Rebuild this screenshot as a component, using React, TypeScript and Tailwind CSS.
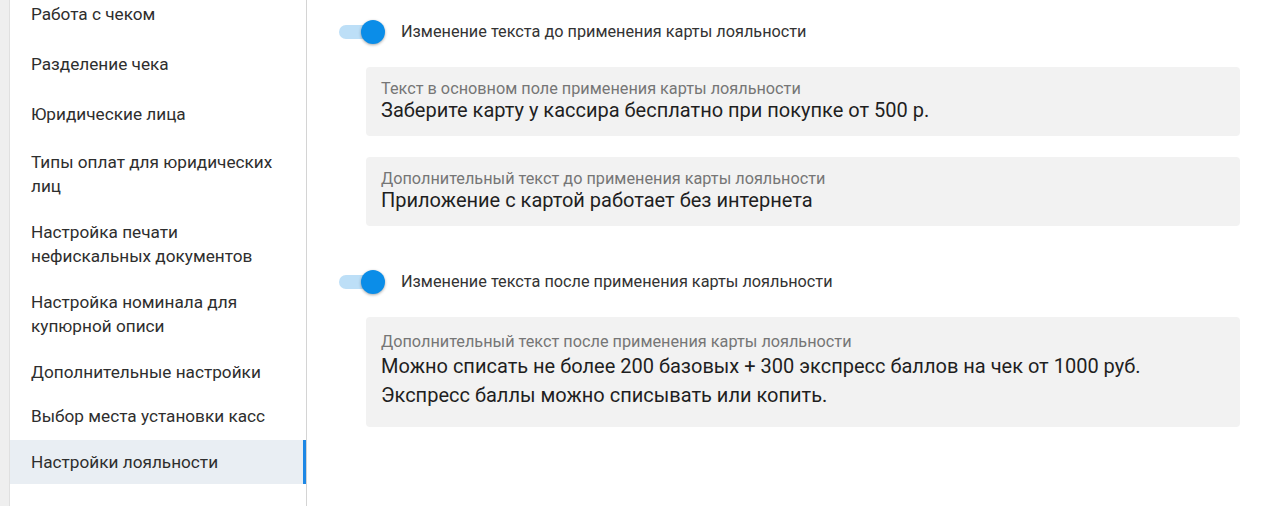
import React from "react";

type NavItem = { title: string; pad: string; active?: boolean };

const navItems: NavItem[] = [
  { title: "Работа с чеком", pad: "pt-[2px] pb-[11px]" },
  { title: "Разделение чека", pad: "py-[15px]" },
  { title: "Юридические лица", pad: "py-[11px]" },
  { title: "Типы оплат для юридических лиц", pad: "py-[13px]" },
  { title: "Настройка печати нефискальных документов", pad: "py-[9px]" },
  { title: "Настройка номинала для купюрной описи", pad: "py-[13px]" },
  { title: "Дополнительные настройки", pad: "py-[9px]" },
  { title: "Выбор места установки касс", pad: "pt-[11px] pb-[12px]" },
  { title: "Настройки лояльности", pad: "py-[10px]", active: true },
];

function Toggle() {
  return (
    <div className="relative w-[46px] h-6 shrink-0">
      <div className="absolute left-0 top-[5px] w-[40px] h-[14px] rounded-full bg-[#bddff7]" />
      <div className="absolute right-0 top-0 w-6 h-6 rounded-full bg-[#0b8de8] shadow-[0_1px_3px_rgba(0,0,0,0.35)]" />
    </div>
  );
}

function Field({
  label,
  lines,
  pad,
  labelLeading,
}: {
  label: string;
  lines: string[];
  pad: string;
  labelLeading: string;
}) {
  return (
    <div className={`ml-[27px] bg-[#f2f2f2] rounded-[4px] px-[15px] ${pad}`}>
      <div className={`text-[16.25px] ${labelLeading} text-[#767676]`}>{label}</div>
      {lines.map((l) => (
        <div key={l} className="text-[20px] leading-[29px] text-[#1f1f1f]">
          {l}
        </div>
      ))}
    </div>
  );
}

function Section({ title, children }: { title: string; children: React.ReactNode }) {
  return (
    <div>
      <div className="flex items-center gap-4">
        <Toggle />
        <span className="text-[16.25px] leading-6 text-[#333333]">{title}</span>
      </div>
      <div className="mt-[23px] flex flex-col gap-[21px]">{children}</div>
    </div>
  );
}

export default function App() {
  return (
    <div
      className="flex h-screen bg-white overflow-hidden"
      style={{ fontFamily: "Roboto, 'Noto Sans', sans-serif" }}
    >
      <div className="w-[9px] bg-[#efefef] shrink-0" />
      {/* боковое меню */}
      <aside className="w-[298px] shrink-0 border-l border-r border-[#e0e0e0] border-r-[#d4d4d4] bg-white">
        {navItems.map((item) => (
          <div
            key={item.title}
            className={`pl-[21px] pr-[16px] ${item.pad} text-[17.2px] leading-6 text-[#2e2e2e] ${
              item.active ? "bg-[#e9eef3] border-r-[3px] border-[#1e88e5]" : "border-r-[3px] border-transparent"
            }`}
          >
            {item.title}
          </div>
        ))}
      </aside>

      <main className="flex-1 pt-5 pl-8 pr-[35px]">
        <Section title="Изменение текста до применения карты лояльности">
          <Field
            pad="pt-[14px] pb-[11px]"
            labelLeading="leading-[15px]"
            label="Текст в основном поле применения карты лояльности"
            lines={["Заберите карту у кассира бесплатно при покупке от 500 р."]}
          />
          <Field
            pad="pt-[14px] pb-[11px]"
            labelLeading="leading-[15px]"
            label="Дополнительный текст до применения карты лояльности"
            lines={["Приложение с картой работает без интернета"]}
          />
        </Section>
        <div className="mt-[44px]">
          <Section title="Изменение текста после применения карты лояльности">
            <Field
              pad="pt-[15px] pb-[17px]"
              labelLeading="leading-[20px]"
              label="Дополнительный текст после применения карты лояльности"
              lines={[
                "Можно списать не более 200 базовых + 300 экспресс баллов на чек от 1000 руб.",
                "Экспресс баллы можно списывать или копить.",
              ]}
            />
          </Section>
        </div>
      </main>
    </div>
  );
}
